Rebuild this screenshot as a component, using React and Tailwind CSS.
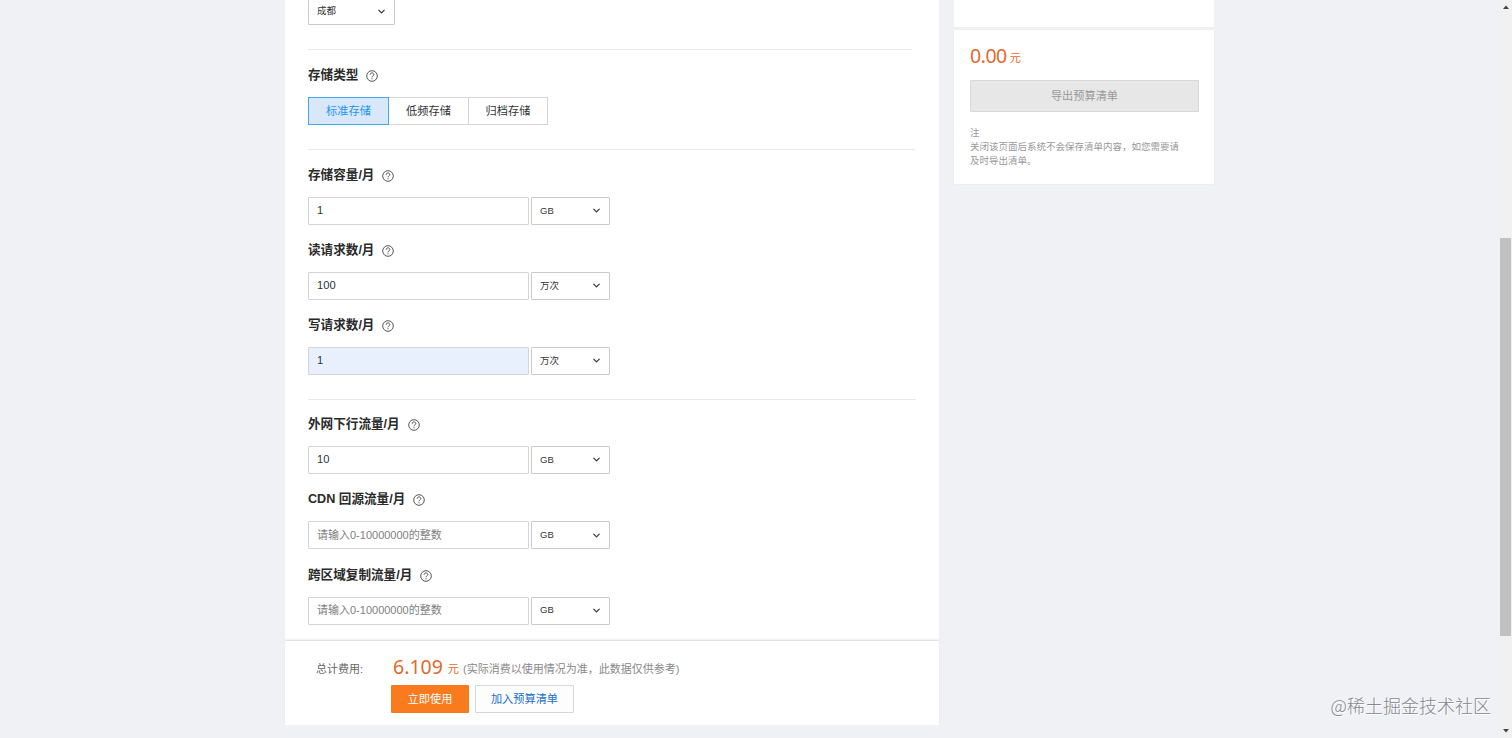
import React from 'react';
import { ChevronDown } from 'lucide-react';

const UNITS = ['GB', '万次'];

const requestFields = [
  { label: '存储容量/月', value: '1', unit: UNITS[0] },
  { label: '读请求数/月', value: '100', unit: UNITS[1] },
  { label: '写请求数/月', value: '1', unit: UNITS[1], autofilled: true },
];

const trafficFields = [
  { label: '外网下行流量/月', value: '10', unit: UNITS[0] },
  { label: 'CDN 回源流量/月', value: '', unit: UNITS[0] },
  { label: '跨区域复制流量/月', value: '', unit: UNITS[0] },
];

const HelpIcon = () => (
  <svg className="w-[12px] h-[12px] mt-[2px] shrink-0" viewBox="0 0 12 12" fill="none" stroke="#444" strokeWidth="0.9">
    <circle cx="6" cy="6" r="5.3" />
    <path d="M4.2 4.8c0-1.2.8-1.9 1.8-1.9s1.8.7 1.8 1.7c0 1.2-1.8 1.3-1.8 2.7" />
    <path d="M6 8.2v1.1" />
  </svg>
);

const FieldLabel = ({ children }) => (
  <div className="flex items-center h-6 gap-[8px]">
    <span className="pt-px text-[12.6px] font-semibold text-[#2a2a2a]">{children}</span>
    <HelpIcon />
  </div>
);

const Select = ({ value, className }) => (
  <button
    className={`flex items-center justify-between h-7 pl-[8px] pr-[7px] bg-white border border-[#c8cacd] rounded-[1px] text-[9.5px] text-[#333] ${className}`}
  >
    <span>{value}</span>
    <ChevronDown className="w-[11px] h-[11px]" strokeWidth={2.6} />
  </button>
);

const Divider = ({ className }) => <div className={`h-px bg-[#e8e9eb] ${className}`} />;

const Field = ({ label, value, unit, autofilled }) => (
  <div>
    <FieldLabel>{label}</FieldLabel>
    <div className="flex gap-[2px] mt-[9.8px]">
      <input
        className={`w-[221px] h-7 px-[8px] pb-px border border-[#d3d5d8] rounded-[1px] text-[11.2px] text-[#333] placeholder:text-[11px] placeholder:text-[#808080] outline-none ${
          autofilled ? 'bg-[#e8f0fe]' : 'bg-white'
        }`}
        defaultValue={value}
        placeholder="请输入0-10000000的整数"
      />
      <Select value={unit} className="w-[79px]" />
    </div>
  </div>
);

const StorageTabs = () => (
  <div className="flex mt-[10px] text-[11.2px] text-[#333]">
    <button className="w-[81px] h-7 border border-[#45a8f0] bg-[#d9e7fa] text-[#1d95f0]">标准存储</button>
    <button className="w-[79px] h-7 border-y border-[#d3d5d8]">低频存储</button>
    <button className="w-[80px] h-7 border border-[#d3d5d8]">归档存储</button>
  </div>
);

const TotalBar = () => (
  <div className="h-[85px] bg-white border-t border-[#e0e2e5] shadow-[0_-1px_2px_rgba(0,0,0,0.06)] pl-[31px]">
    <div className="flex items-baseline pt-[11px] h-[44px] text-[11px] leading-[28px] whitespace-nowrap">
      <span className="w-[77px] text-[#666]">总计费用:</span>
      <span className="font-['Noto_Sans'] text-[19.5px] text-[#e4682a] relative top-px">6.109</span>
      <span className="ml-[5px] text-[11.2px] text-[#e4682a]">元</span>
      <span className="ml-[4px] text-[#888]">(实际消费以使用情况为准，此数据仅供参考)</span>
    </div>
    <div className="flex gap-[6px] pl-[75px] text-[11.2px]">
      <button className="w-[78px] h-7 rounded-[1px] bg-[#fa7a1e] text-white">立即使用</button>
      <button className="w-[99px] h-7 rounded-[1px] border border-[#d5d7da] bg-[#fdfdfd] text-[#1a6fc9]">
        加入预算清单
      </button>
    </div>
  </div>
);

const BudgetPanel = () => (
  <aside className="w-[260px] ml-[15px]">
    <div className="h-[27px] bg-white" />
    <div className="h-[154px] mt-[3px] px-[16px] bg-white shadow-[0_0_2px_rgba(0,0,0,0.05)]">
      <div className="flex items-baseline h-[50px] pt-[11px] leading-[28px] text-[#e4682a]">
        <span className="font-['Noto_Sans'] text-[19.5px] tracking-[-0.5px] relative top-px">0.00</span>
        <span className="ml-[3px] text-[11.2px]">元</span>
      </div>
      <button className="block w-[229px] h-8 rounded-[1px] border border-[#d9d9d9] bg-[#e7e7e7] text-[11.2px] text-[#999]">
        导出预算清单
      </button>
      <div className="mt-[14px] w-[214px] text-[9.5px] leading-[14px] text-[#999]">
        <p>注</p>
        <p>关闭该页面后系统不会保存清单内容，如您需要请及时导出清单。</p>
      </div>
    </div>
  </aside>
);

const ScrollBar = () => (
  <div className="flex flex-col items-center justify-between w-[13px] ml-auto bg-[#f1f1f1] py-[5px]">
    <svg className="w-[6px] h-[4px]" viewBox="0 0 6 4">
      <path d="M0 4L3 0.5L6 4Z" fill="#444" />
    </svg>
    <div className="w-[11px] h-[398px] mt-[229px] mb-auto bg-[#c1c1c1]" />
    <svg className="w-[6px] h-[4px]" viewBox="0 0 6 4">
      <path d="M0 0L3 3.5L6 0Z" fill="#444" />
    </svg>
  </div>
);

const App = () => {
  return (
    <div className="relative flex h-[738px] overflow-hidden bg-[#eff1f5] pl-[285px] font-['Liberation_Sans','Noto_Sans_CJK_SC',sans-serif]">
      <main className="w-[654px]">
        <div className="h-[640px] overflow-hidden bg-white pl-[23px] pr-[23px]">
          <Select value="成都" className="w-[87px] -mt-[3px]" />
          <Divider className="mt-6 mr-[4px]" />

          <div className="mt-[13px]">
            <FieldLabel>存储类型</FieldLabel>
            <StorageTabs />
          </div>
          <Divider className="mt-6 mr-[1px]" />

          <div className="flex flex-col gap-[13.3px] mt-[13px]">
            {requestFields.map((field) => (
              <Field key={field.label} {...field} />
            ))}
          </div>
          <Divider className="mt-[23.6px]" />

          <div className="flex flex-col gap-[13.6px] mt-[12.4px]">
            {trafficFields.map((field) => (
              <Field key={field.label} {...field} />
            ))}
          </div>
        </div>
        <TotalBar />
      </main>

      <BudgetPanel />
      <ScrollBar />

      {/* Watermark */}
      <div className="absolute right-[21px] bottom-[19px] text-[18px] leading-[28px] text-[#85878b] font-['Noto_Sans_CJK_SC',sans-serif] font-light [text-shadow:1px_1px_0_#fff]">
        @稀土掘金技术社区
      </div>
    </div>
  );
};

export default App;
